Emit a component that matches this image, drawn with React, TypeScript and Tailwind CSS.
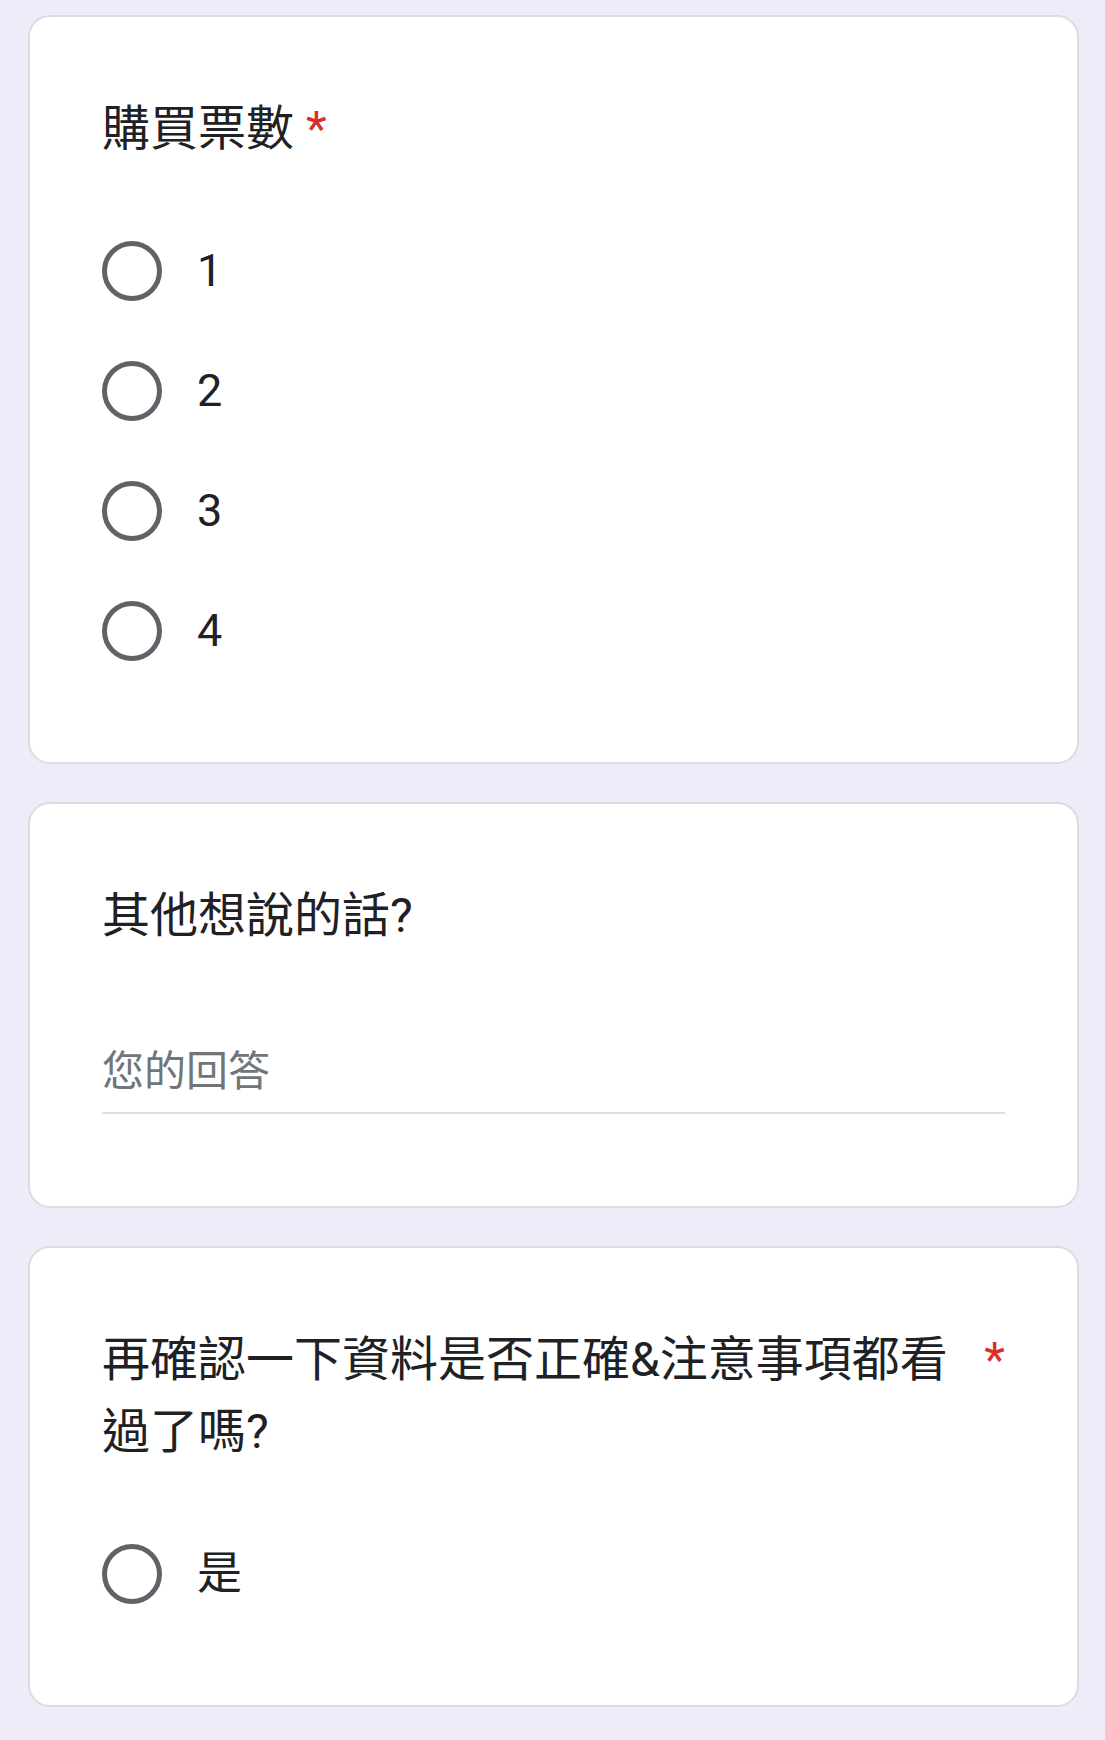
import { ReactNode } from 'react'

const font = { fontFamily: '"Roboto", "Noto Sans CJK TC", sans-serif' }

function Card({ children }: { children: ReactNode }) {
  return (
    <div className="rounded-[22px] border-2 border-[#dadce0] bg-white px-[72px] pt-[76px]">
      {children}
    </div>
  )
}

function Title({ text, required }: { text: string; required?: boolean }) {
  return (
    <div className="flex items-start text-[48px] leading-[72px] text-[#202124]">
      <span>{text}</span>
      {required && <span className="ml-[12px] shrink-0 text-[#d93025]">*</span>}
    </div>
  )
}

function Radio({ label }: { label: string }) {
  return (
    <div className="flex h-[120px] items-center">
      <div className="h-[60px] w-[60px] shrink-0 rounded-full border-[5px] border-[#5f6368]" />
      <span className="ml-[35px] text-[45px] text-[#202124]">{label}</span>
    </div>
  )
}

export default function App() {
  return (
    <div className="min-h-screen bg-[#f0ebf8] px-[28px] pt-[15px] pb-[36px]" style={font}>
      <div className="flex w-[1051px] flex-col gap-[38px]">
        <Card>
          <Title text="購買票數" required />
          <div className="mt-[46px] pb-[71px]">
            {['1', '2', '3', '4'].map((n) => (
              <Radio key={n} label={n} />
            ))}
          </div>
        </Card>

        <Card>
          <Title text="其他想說的話?" />
          <div className="mt-[88px] mb-[92px] border-b-2 border-[#e0e0e0] pb-[9px]">
            <span className="block text-[42px] leading-[63px] text-[#70757a]">您的回答</span>
          </div>
        </Card>

        <Card>
          <Title text="再確認一下資料是否正確&注意事項都看過了嗎?" required />
          <div className="mt-[46px] pb-[71px]">
            <Radio label="是" />
          </div>
        </Card>
      </div>
    </div>
  )
}
